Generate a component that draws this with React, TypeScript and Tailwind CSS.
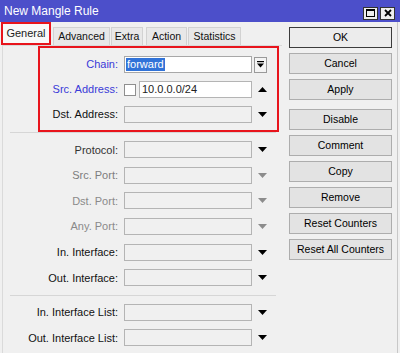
import React from 'react'

const font = { fontFamily: '"Liberation Sans", Arial, sans-serif' }

function Down({ grey }: { grey?: boolean }) {
  return (
    <svg width="9" height="5" viewBox="0 0 9 5">
      <polygon points="0,0 9,0 4.5,5" fill={grey ? '#8c8c8c' : '#000'} />
    </svg>
  )
}

function Up() {
  return (
    <svg width="9" height="5" viewBox="0 0 9 5">
      <polygon points="0,5 9,5 4.5,0" fill="#000" />
    </svg>
  )
}

function Field({ white, children }: { white?: boolean; children?: React.ReactNode }) {
  return (
    <div
      className={
        'h-[17px] flex items-center px-[2px] border border-[#b4b4b4] text-[11px] text-[#1a1a1a] ' +
        (white ? 'bg-white w-[128px]' : 'bg-[#f0f0f0] w-[128px]')
      }
    >
      {children}
    </div>
  )
}

function Row({
  label,
  color,
  labelW,
  h,
  children,
}: {
  label: string
  color: string
  labelW: string
  h: string
  children: React.ReactNode
}) {
  return (
    <div className={'flex items-center ' + h}>
      <div className={'text-right text-[11px] pr-[6px] ' + labelW + ' ' + color}>{label}</div>
      {children}
    </div>
  )
}

const Arrow = ({ children }: { children: React.ReactNode }) => (
  <div className="w-[20px] flex items-center justify-center">{children}</div>
)

function Btn({ label, primary, extra }: { label: string; primary?: boolean; extra?: string }) {
  return (
    <div
      className={
        'w-[103px] h-[21px] flex items-center justify-center text-[10.5px] text-black ' +
        (primary ? 'border border-[#3c3c3c] bg-[#ececec] ' : 'border border-[#adadad] bg-[#e3e3e3] ') +
        (extra ?? '')
      }
    >
      {label}
    </div>
  )
}

export default function App() {
  const lower: { label: string; color: string; grey?: boolean }[] = [
    { label: 'Protocol:', color: 'text-[#333]' },
    { label: 'Src. Port:', color: 'text-[#7d7d7d]', grey: true },
    { label: 'Dst. Port:', color: 'text-[#8a8a8a]', grey: true },
    { label: 'Any. Port:', color: 'text-[#8a8a8a]', grey: true },
    { label: 'In. Interface:', color: 'text-[#111]' },
    { label: 'Out. Interface:', color: 'text-[#111]' },
  ]

  return (
    <div className="w-[400px] h-[353px] overflow-hidden bg-[#f0f0f0] flex flex-col" style={font}>
      {/* title bar */}
      <div className="h-[22px] bg-[#4c4fca] flex items-center justify-between pl-[4px] pr-[5px] shrink-0">
        <span className="text-white text-[12px]">New Mangle Rule</span>
        <div className="flex gap-[2px] mt-[4px]">
          <div className="w-[15px] h-[13px] bg-[#eeeeee] border border-[#333] flex items-center justify-center">
            <div className="w-[9px] h-[8px] border border-black border-t-2" />
          </div>
          <div className="w-[15px] h-[13px] bg-[#eeeeee] border border-[#333] flex items-center justify-center">
            <svg width="8" height="8" viewBox="0 0 8 8">
              <path d="M1 1 L7 7 M7 1 L1 7" stroke="#000" strokeWidth="1.8" />
            </svg>
          </div>
        </div>
      </div>

      <div className="flex flex-1 border-r border-[#c8c8c8] mr-[2px]">
        {/* left column */}
        <div className="w-[282px] flex flex-col">
          <div className="h-[23px] flex items-end shrink-0">
            <div className="ml-[1px] w-[50px] h-[23px] border-2 border-[#e8141c] bg-[#f9f9f9] flex items-center justify-center text-[11px] text-[#222]">
              General
            </div>
            <div className="ml-[2px] w-[57px] h-[18px] bg-[#e8e8e8] border border-b-0 border-[#d2d2d2] flex items-center justify-center text-[10.5px] text-[#111]">
              Advanced
            </div>
            <div className="ml-[1px] w-[32px] h-[18px] bg-[#e8e8e8] border border-b-0 border-[#d2d2d2] flex items-center justify-center text-[10.5px] text-[#111]">
              Extra
            </div>
            <div className="ml-[3px] w-[41px] h-[18px] bg-[#e8e8e8] border border-b-0 border-[#d2d2d2] flex items-center justify-center text-[10.5px] text-[#111]">
              Action
            </div>
            <div className="ml-[1px] w-[53px] h-[18px] bg-[#e8e8e8] border border-b-0 border-[#d2d2d2] flex items-center justify-center text-[10.5px] text-[#111]">
              Statistics
            </div>
          </div>

          <div className="flex-1 ml-[2px] border-l border-t border-[#dadada] flex flex-col">
            {/* highlighted group */}
            <div className="ml-[35px] w-[241px] h-[86px] border-2 border-[#e8141c] pt-[4px]">
              <Row label="Chain:" color="text-[#3a3ad8]" labelW="w-[84px]" h="h-[25px]">
                <div className="w-[128px] h-[17px] bg-white border border-[#a8a8a8] flex items-center pl-[1px]">
                  <span className="bg-[#3173d8] text-white text-[11px] leading-[13px] px-[1px]">forward</span>
                </div>
                <div className="ml-[2px] w-[13px] h-[16px] border border-[#9a9a9a] bg-[#f4f4f4] flex items-center justify-center">
                  <svg width="7" height="7" viewBox="0 0 7 7">
                    <rect x="0" y="0" width="7" height="1.2" fill="#000" />
                    <polygon points="0,2.5 7,2.5 3.5,6.5" fill="#000" />
                  </svg>
                </div>
              </Row>
              <Row label="Src. Address:" color="text-[#3a3ad8]" labelW="w-[84px]" h="h-[25px]">
                <div className="w-[12px] h-[12px] bg-white border border-[#8f8f8f]" />
                <div className="ml-[3px] w-[113px] h-[17px] bg-white border border-[#b4b4b4] flex items-center px-[2px] text-[11px] text-[#222]">
                  10.0.0.0/24
                </div>
                <Arrow>
                  <Up />
                </Arrow>
              </Row>
              <Row label="Dst. Address:" color="text-[#111]" labelW="w-[84px]" h="h-[25px]">
                <Field />
                <Arrow>
                  <Down />
                </Arrow>
              </Row>
            </div>
            <div className="ml-[7px] w-[266px] h-px bg-[#d6d6d6]" />

            <div className="pt-[4px]">
              {lower.map(r => (
                <Row key={r.label} label={r.label} color={r.color} labelW="w-[121px]" h="h-[25.6px]">
                  <Field />
                  <Arrow>
                    <Down grey={r.grey} />
                  </Arrow>
                </Row>
              ))}
            </div>
            <div className="ml-[7px] mt-[4px] w-[266px] h-px bg-[#d6d6d6]" />
            <div className="pt-[4px]">
              {['In. Interface List:', 'Out. Interface List:'].map(l => (
                <Row key={l} label={l} color="text-[#111]" labelW="w-[121px]" h="h-[25.6px]">
                  <Field />
                  <Arrow>
                    <Down />
                  </Arrow>
                </Row>
              ))}
            </div>
          </div>
        </div>

        {/* right column */}
        <div className="pl-[7px] pt-[5px] flex flex-col">
          <Btn label="OK" primary />
          <Btn label="Cancel" extra="mt-[5px]" />
          <Btn label="Apply" extra="mt-[5px]" />
          <Btn label="Disable" extra="mt-[9px]" />
          <Btn label="Comment" extra="mt-[5px]" />
          <Btn label="Copy" extra="mt-[5px]" />
          <Btn label="Remove" extra="mt-[5px]" />
          <Btn label="Reset Counters" extra="mt-[5px]" />
          <Btn label="Reset All Counters" extra="mt-[5px]" />
        </div>
      </div>
    </div>
  )
}
